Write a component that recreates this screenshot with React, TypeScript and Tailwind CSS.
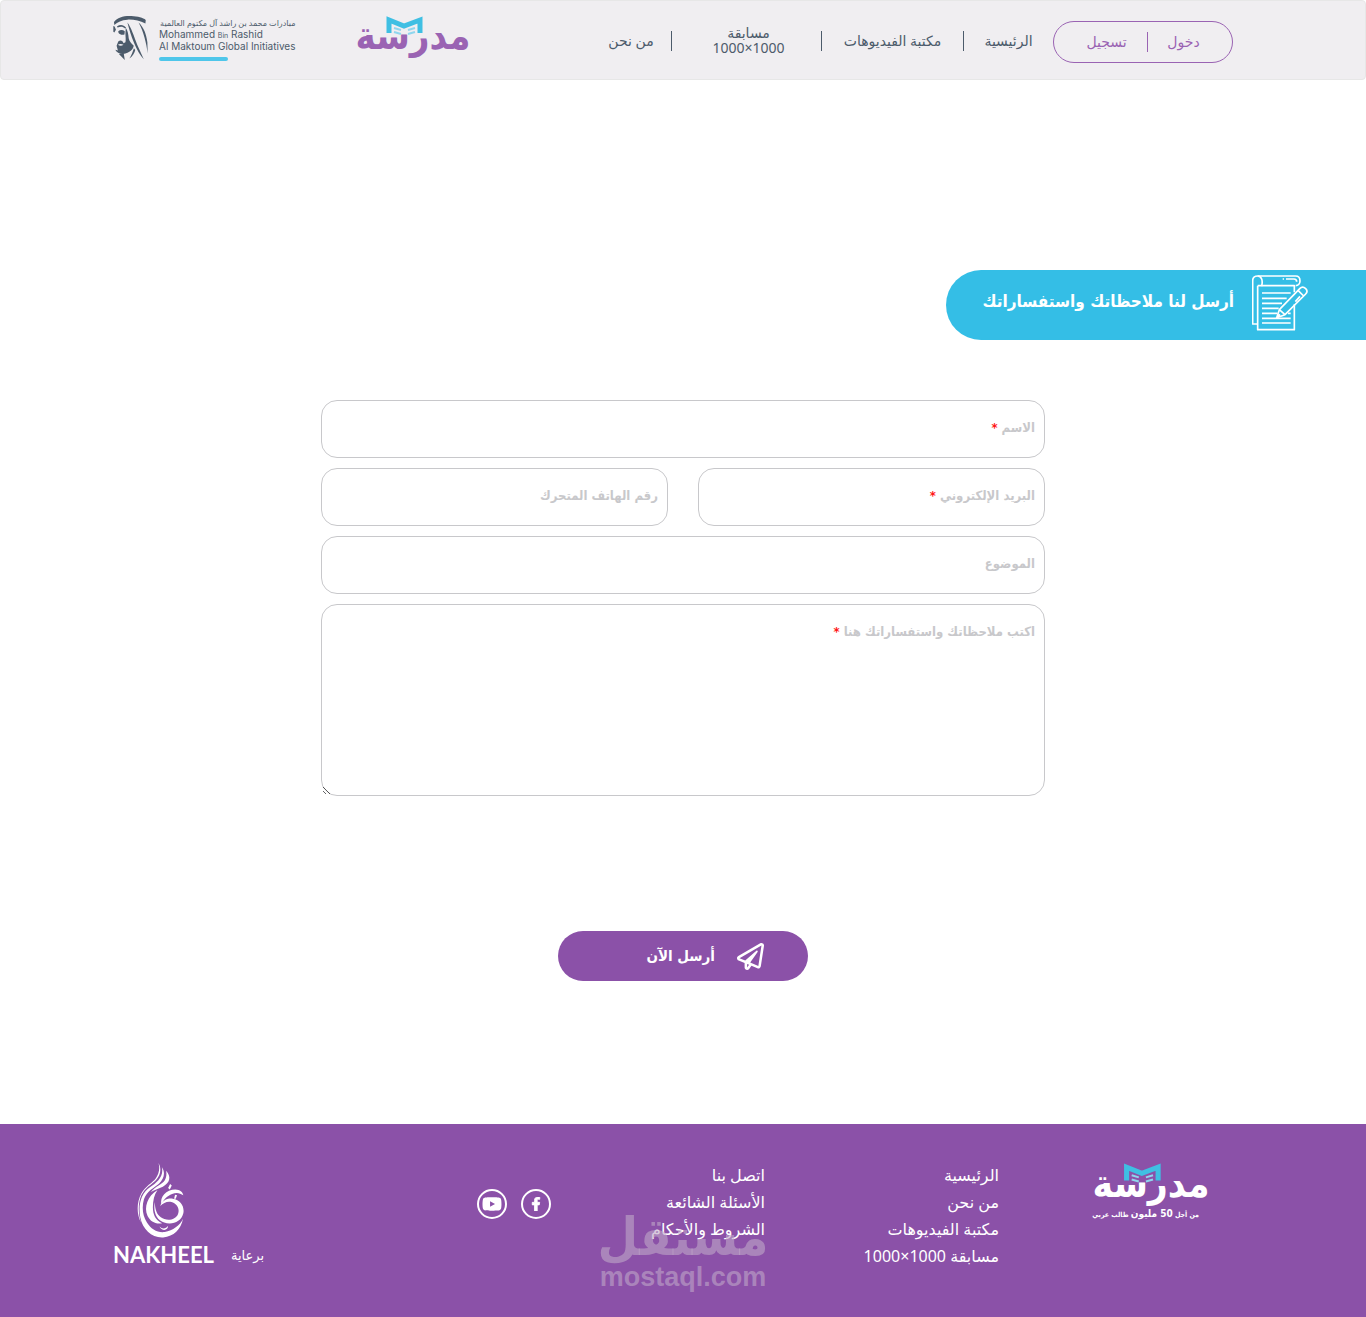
import { FaFacebookF, FaRegPaperPlane, FaYoutube } from "react-icons/fa";

interface NavItem {
  label: string;
  width: string;
}

const navItems: NavItem[] = [
  { label: "الرئيسية", width: "w-[90px]" },
  { label: "مكتبة الفيديوهات", width: "w-[142px]" },
  { label: "مسابقة 1000×1000", width: "w-[150px] pr-7 pl-8" },
  { label: "من نحن", width: "w-[80px]" },
];

const footerMain = ["الرئيسية", "من نحن", "مكتبة الفيديوهات", "مسابقة 1000×1000"];
const footerHelp = ["اتصل بنا", "الأسئلة الشائعة", "الشروط والأحكام"];

const fieldClass =
  "peer block w-full rounded-2xl border border-[#c8c8cb] bg-white px-[9px] text-sm text-[#4c5b6b] outline-none focus:border-[#8b51a8]";

function MadrasaLogo({ light = false }: { light?: boolean }) {
  const main = light ? "#ffffff" : "#9a63b3";
  return (
    <svg
      viewBox="0 0 118 44"
      className={light ? "h-[45px] w-[120px]" : "h-11 w-[118px]"}
      overflow="visible"
      role="img"
      aria-label="مدرسة"
    >
      <text
        x="59"
        y="34"
        textAnchor="middle"
        direction="rtl"
        fontFamily='"DejaVu Sans Condensed", "DejaVu Sans", sans-serif'
        fontWeight="700"
        fontSize="38"
        fill={main}
      >
        مدرسة
      </text>
      <path d="M35 18V5l15 6 16-6v13" fill="none" stroke="#3fbfe3" strokeWidth="5" />
      <path
        d="M40 13l7 2M40 17l7 2M61 13l-7 2M61 17l-7 2"
        stroke="#8fd6ee"
        strokeWidth="2"
      />
    </svg>
  );
}

function InitiativesLogo() {
  return (
    <a href="#" dir="ltr" className="flex items-start gap-2.5 text-[#4c5b6b]">
      <svg viewBox="68 46 110 138" className="h-[46px] w-9" fill="currentColor" aria-hidden="true">
        <path d="M71 66C82 52 100 47 124 48C144 49 160 53 168 60L167 71C150 62 130 58 112 59C94 60 82 66 72 75z" />
        <path d="M69 78l4 2 4 10-5 8-3-2zM84 94c6-5 14-5 20 0l-1 10c-6 3-14 1-18-4z" />
        <path d="M80 80c10-7 20-6 28 4l-3 2c-7-7-14-7-23-3z" />
        <path d="M107 84c6 8 8 20 9 32 2 10 8 16 15 22 0 12-12 22-32 26-10 1-20-5-24-13l8 2-4-14 5-13c6-6 14-3 16 5l6-3c2-8 0-18 0-26z" />
        <path d="M83 136c5-4 11-4 17 0-5 4-12 4-17 0z" fill="#f0eef1" />
        <path d="M112 68c12 16 20 42 30 68l20 44c-22-22-40-72-50-112z" />
        <path d="M146 68c16 14 24 36 27 60l1 34c-4-30-12-66-28-94z" />
        <path d="M86 164l18 18-3-19zM132 146c-4 12-8 22-14 32 10-6 16-18 18-26z" />
      </svg>
      <span className="flex flex-col">
        <span dir="rtl" className="mt-0.5 text-right text-[8px] leading-3">
          مبادرات محمد بن راشد آل مكتوم العالمية
        </span>
        <span className="font-[Inter,sans-serif] text-[10px] leading-[10px]">
          Mohammed <span className="text-[7px]">Bin</span> Rashid
        </span>
        <span className="font-[Inter,sans-serif] text-[10px] leading-[10px]">
          Al Maktoum Global Initiatives
        </span>
        <span className="mt-1.5 h-1 w-[69px] rounded-full bg-[#4fc6ea]" />
      </span>
    </a>
  );
}

function NotepadIcon() {
  return (
    <svg
      viewBox="966 44 168 168"
      className="size-14"
      fill="none"
      stroke="currentColor"
      strokeWidth="5"
      strokeLinejoin="round"
      aria-hidden="true"
    >
      <path d="M983 76h12c4-14 0-29-12-29s-15 8-15 14v130h15" />
      <path d="M983 76v132h110v-76M1093 96V76H995" />
      <path d="M983 47h114c10 0 13 8 13 15s-5 14-13 14" />
      <path d="M1058 56h4M1068 56h24c6 0 8 4 8 8" />
      <path d="M996 98h86M996 114h74M996 129h60M996 144h50M996 159h46M1074 159h8M996 174h86M996 188h86" />
      <path d="M1040 172l8-24 62-64c6-6 12-4 17 1s6 10 0 16l-62 62zM1048 148l17 15M1104 90l17 17M1096 124l14-16M1040 172l10-10" />
    </svg>
  );
}

function NakheelLogo() {
  return (
    <a href="#" dir="ltr" className="flex w-[100px] flex-col text-white">
      <svg
        viewBox="138 40 142 228"
        className="ml-6 h-[76px] w-[47px]"
        fill="currentColor"
        aria-hidden="true"
      >
        <path d="M203 42c10 18 6 36-8 52-12 12-34 24-44 46-9 20-11 52-1 82-14-26-13-62 1-88 12-22 34-32 44-46 9-13 13-29 8-46z" />
        <path d="M213 54c12 18 6 36-8 50-14 13-38 22-46 48-7 24-4 50 9 70 12 20 32 32 54 29 24-4 46-20 55-40-6 32-28 54-60 56-34 2-62-24-69-60-7-38 2-74 30-92 20-14 42-32 35-61z" />
        <path d="M226 66c16 18 12 36-10 48-12 6-24 9-36 16 14-18 34-24 42-36 5-8 6-17 4-28z" />
        <path d="M200 124c-30 18-42 52-30 78 8 16 24 26 44 22-20-8-28-26-28-48 0-20 4-38 14-52z" />
        <path d="M192 160c0 22 6 38 18 46 16 12 44 10 52-10 6-16-4-32-20-36-12-3-24 2-34 12 6-16 20-24 38-22 24 3 36 24 32 44-6 26-34 36-58 28-24-8-34-34-28-62z" />
        <path d="M212 168c-6-24 14-46 42-46 14 1 22 7 24 18-10-8-22-10-34-4-14 6-26 16-32 32z" />
        <path d="M232 118l6-12 5 4-6 12zM250 150l3-12 6 2-4 10zM206 234c8 8 18 8 26-2 0 16-20 16-26 2z" />
      </svg>
      <span className="mt-[3px] font-[Lato,sans-serif] text-[22px] leading-7 font-bold">NAKHEEL</span>
    </a>
  );
}

function Field({
  id,
  label,
  required = false,
  type = "text",
}: {
  id: string;
  label: string;
  required?: boolean;
  type?: string;
}) {
  return (
    <div className="relative">
      {type === "textarea" ? (
        <textarea id={id} placeholder=" " className={`${fieldClass} h-48 resize pt-4`} />
      ) : (
        <input id={id} type={type} placeholder=" " className={`${fieldClass} h-[58px]`} />
      )}
      <label
        htmlFor={id}
        className="pointer-events-none absolute top-4 right-2.5 font-['DejaVu_Sans_Condensed','DejaVu_Sans',sans-serif] text-[13px] leading-6 font-bold text-[#c8c8cb] peer-[:not(:placeholder-shown)]:hidden"
      >
        {label} {required && <span className="text-[#ff1616]">*</span>}
      </label>
    </div>
  );
}

function Header() {
  return (
    <header className="rounded border border-[#e7e7e7] bg-[#f0eef1]">
      <div className="mx-auto flex h-[78px] max-w-[1140px] items-start justify-between pr-5">
        <div className="flex items-start">
          <div className="mt-5 flex h-[42px] w-[180px] items-center justify-center rounded-full border border-[#9a63b3] text-sm text-[#9a63b3]">
            <a href="#" className="w-[72px] text-center">
              دخول
            </a>
            <span className="h-5 w-px bg-[#9a63b3]" />
            <a href="#" className="w-20 text-center">
              تسجيل
            </a>
          </div>
          <nav className="mt-[30px] flex h-5 items-center text-sm leading-[15px] text-[#4c5b6b]">
            {navItems.map((item) => (
              <a
                key={item.label}
                href="#"
                className={`${item.width} flex h-5 items-center justify-center border-l border-[#4c5b6b] pb-0.5 text-center last:border-l-0`}
              >
                {item.label}
              </a>
            ))}
          </nav>
        </div>
        <div className="flex items-start gap-[59px] pt-[14px]">
          <a href="#">
            <MadrasaLogo />
          </a>
          <InitiativesLogo />
        </div>
      </div>
    </header>
  );
}

function Footer() {
  return (
    <footer className="relative bg-[#8b51a8] text-white">
      <div className="mx-auto flex h-[193px] max-w-[1140px] items-start justify-between pt-[38px] pr-[42px]">
        <div className="flex">
          <a href="#" className="w-[212px]">
            <MadrasaLogo light />
            <span className="block pt-px pr-3 font-['DejaVu_Sans_Condensed','DejaVu_Sans',sans-serif] text-[7px] leading-3 font-bold whitespace-nowrap">
              من أجل <span className="text-[10px]">50 مليون</span> طالب عربي
            </span>
          </a>
          <ul className="w-[234px] text-base leading-[27px]">
            {footerMain.map((label) => (
              <li key={label}>
                <a href="#">{label}</a>
              </li>
            ))}
          </ul>
          <ul className="w-[214px] text-base leading-[27px]">
            {footerHelp.map((label) => (
              <li key={label}>
                <a href="#">{label}</a>
              </li>
            ))}
          </ul>
          <div className="mt-[27px] flex gap-[14px]">
            <a
              href="#"
              aria-label="Facebook"
              className="flex size-[30px] items-center justify-center rounded-full border-2 border-white"
            >
              <FaFacebookF size={14} stroke="currentColor" strokeWidth={30} />
            </a>
            <a
              href="#"
              aria-label="YouTube"
              className="flex size-[30px] items-center justify-center rounded-full border-2 border-white"
            >
              <FaYoutube size={20} />
            </a>
          </div>
        </div>
        <div className="flex items-end gap-[18px]">
          <span className="pb-1 text-[13px] leading-5">برعاية</span>
          <NakheelLogo />
        </div>
      </div>
      <div
        dir="ltr"
        className="pointer-events-none absolute bottom-[26px] left-1/2 flex -translate-x-1/2 flex-col items-center font-bold text-[#c0a8c8]/60"
      >
        <span
          dir="rtl"
          className="font-['DejaVu_Sans_Condensed','DejaVu_Sans',sans-serif] text-[52px] leading-[52px]"
        >
          مستقل
        </span>
        <span className="font-['Liberation_Sans',sans-serif] text-[27px] leading-7">mostaql.com</span>
      </div>
    </footer>
  );
}

export default function App() {
  return (
    <div
      dir="rtl"
      className="flex min-h-screen flex-col bg-white font-['Noto_Sans','DejaVu_Sans',sans-serif]"
    >
      <Header />

      <main className="flex-1 pt-[190px]">
        {/* Section title */}
        <div className="flex h-[70px] w-[420px] items-start gap-[18px] rounded-l-full bg-[#34bee6] pt-[5px] pr-[58px] text-white">
          <NotepadIcon />
          <h1 className="pt-3 font-['DejaVu_Sans_Condensed','DejaVu_Sans',sans-serif] text-[17px] leading-7 font-bold whitespace-nowrap">
            أرسل لنا ملاحظاتك واستفساراتك
          </h1>
        </div>

        {/* Contact form */}
        <form className="mx-auto mt-[60px] flex max-w-[724px] flex-col gap-2.5">
          <Field id="name" label="الاسم" required />
          <div className="grid grid-cols-2 gap-[30px]">
            <Field id="email" type="email" label="البريد الإلكتروني" required />
            <Field id="phone" type="tel" label="رقم الهاتف المتحرك" />
          </div>
          <Field id="subject" label="الموضوع" />
          <Field id="message" type="textarea" label="اكتب ملاحظاتك واستفساراتك هنا" required />
          <button
            type="submit"
            className="mx-auto mt-[125px] flex h-[50px] w-[250px] items-center gap-[22px] rounded-full bg-[#8b51a8] pr-11 font-['DejaVu_Sans_Condensed','DejaVu_Sans',sans-serif] text-[15px] font-bold text-white"
          >
            <FaRegPaperPlane size={27} />
            أرسل الآن
          </button>
        </form>
      </main>

      <Footer />
    </div>
  );
}
